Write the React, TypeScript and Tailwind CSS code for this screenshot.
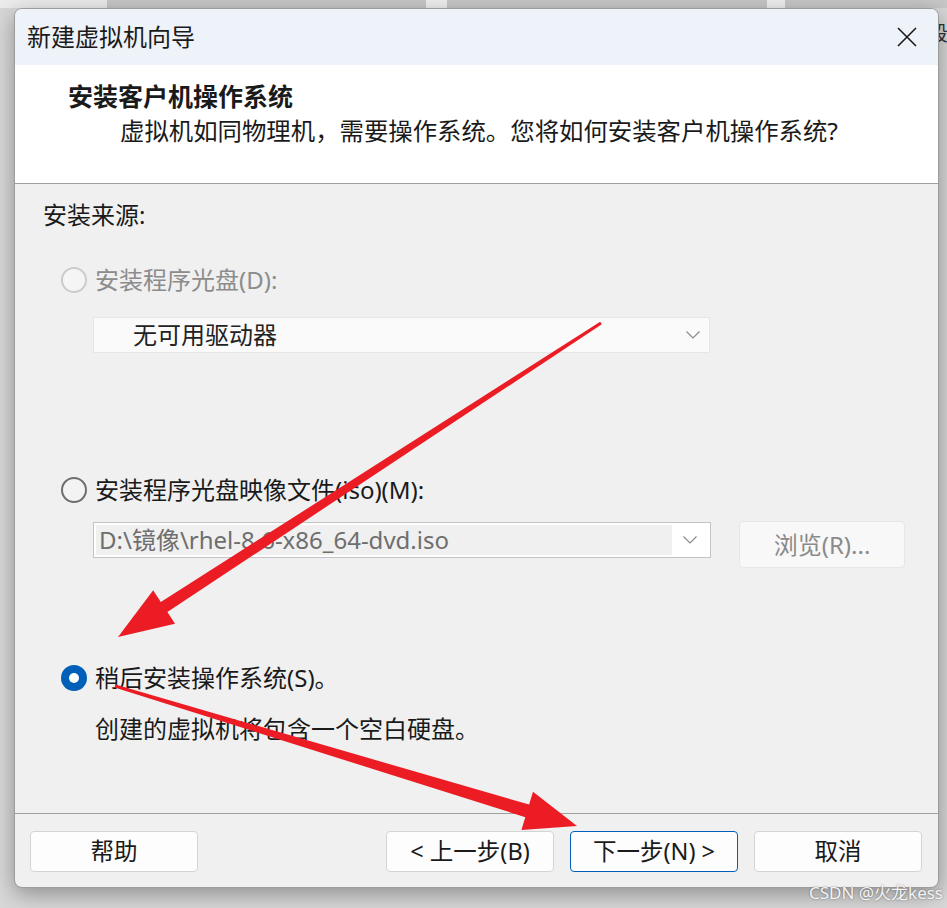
import React from "react";

const Chevron: React.FC = () => (
  <svg width="14" height="8" viewBox="0 0 14 8" className="flex-shrink-0">
    <polyline points="0.5,0.5 7,7 13.5,0.5" fill="none" stroke="#8a8a8a" strokeWidth="1.2" />
  </svg>
);

interface RadioProps {
  state: "disabled" | "off" | "on";
}

const Radio: React.FC<RadioProps> = ({ state }) => {
  if (state === "on") {
    return (
      <div className="w-[26px] h-[26px] rounded-full bg-[#005fb8] flex items-center justify-center flex-shrink-0">
        <div className="w-[10px] h-[10px] rounded-full bg-white" />
      </div>
    );
  }
  return (
    <div
      className={
        state === "disabled"
          ? "w-[26px] h-[26px] rounded-full border-2 border-[#cccccc] bg-[#f5f5f5] flex-shrink-0"
          : "w-[26px] h-[26px] rounded-full border-2 border-[#6e6e6e] bg-[#f3f3f3] flex-shrink-0"
      }
    />
  );
};

const buttons = [
  { label: "< 上一步(B)", primary: false },
  { label: "下一步(N) >", primary: true },
  { label: "取消", primary: false },
];

const Arrows: React.FC = () => (
  <svg
    width="947"
    height="908"
    viewBox="0 0 947 908"
    className="absolute inset-0 z-20 pointer-events-none"
  >
    <polygon
      fill="#ec1c24"
      points="601.8,324.3 167.4,612 175,623.8 118,637 153.2,590.2 160.8,602 600.2,321.7"
    />
    <polygon
      fill="#ec1c24"
      points="115.4,684.6 529.1,804.6 533,791.8 577,826 521.4,830 525.3,817.2 114.6,687.4"
    />
  </svg>
);

const App: React.FC = () => {
  return (
    <div className="relative w-[947px] h-[908px] overflow-hidden bg-[#d8d8d8] font-['Noto_Sans','Noto_Sans_CJK_SC',sans-serif] text-[#1a1a1a]">
      {/* desktop strip behind the dialog */}
      <div className="flex h-[8px]">
        <div className="w-[107px] bg-[#ececec]" />
        <div className="w-[319px] bg-[#c8c8c8]" />
        <div className="w-[21px] bg-[#f0f0f0]" />
        <div className="w-[320px] bg-[#c8c8c8]" />
        <div className="w-[18px] bg-[#f0f0f0]" />
        <div className="flex-1 bg-[#c8c8c8]" />
      </div>
      <span className="absolute left-[928px] top-[24px] text-[20px] leading-none text-[#333]">段</span>

      {/* dialog window */}
      <div className="relative z-10 ml-[14px] w-[925px] h-[880px] rounded-[8px] border border-[#9c9c9c] bg-[#f0f0f0] overflow-hidden flex flex-col shadow-[0_6px_22px_rgba(0,0,0,0.35)]">
        {/* title bar */}
        <div className="h-[56px] bg-[#eef2f9] flex items-center justify-between pl-[12px] pr-[21px] flex-shrink-0">
          <span className="text-[24px] leading-[30px]">新建虚拟机向导</span>
          <svg width="20" height="20" viewBox="0 0 20 20">
            <path d="M1 1 L19 19 M19 1 L1 19" stroke="#1a1a1a" strokeWidth="1.6" fill="none" />
          </svg>
        </div>

        {/* header */}
        <div className="h-[119px] bg-white border-b border-[#a0a0a0] flex flex-col flex-shrink-0">
          <div className="mt-[16px] ml-[53px] text-[25px] leading-[30px] font-bold">安装客户机操作系统</div>
          <div className="mt-[5px] ml-[105px] text-[24.4px] leading-[30px] whitespace-nowrap">
            虚拟机如同物理机，需要操作系统。您将如何安装客户机操作系统?
          </div>
        </div>

        {/* body */}
        <div className="h-[629px] flex flex-col flex-shrink-0 text-[24px]">
          <div className="mt-[16px] ml-[28px] h-[30px] flex items-center">安装来源:</div>

          <div className="mt-[35px] ml-[46px] h-[30px] flex items-center gap-[8px] text-[#8c8c8c]">
            <Radio state="disabled" />
            <span>安装程序光盘(D):</span>
          </div>

          <div className="mt-[22px] ml-[78px] w-[617px] h-[36px] bg-[#fafafa] border border-[#e6e6e6] flex items-center justify-between pl-[39px] pr-[9px]">
            <span className="text-[#222]">无可用驱动器</span>
            <Chevron />
          </div>

          <div className="mt-[122px] ml-[46px] h-[30px] flex items-center gap-[8px]">
            <Radio state="off" />
            <span>安装程序光盘映像文件(iso)(M):</span>
          </div>

          <div className="mt-[16px] ml-[78px] flex items-start">
            <div className="mt-[1px] w-[618px] h-[36px] bg-white border border-[#c4c4c4] flex items-center p-[2px]">
              <div className="flex-1 h-full bg-[#f0f0f0] flex items-center pl-[3px] text-[#6e6e6e] overflow-hidden whitespace-nowrap">
                D:\镜像\rhel-8.6-x86_64-dvd.iso
              </div>
              <div className="w-[36px] flex items-center justify-center">
                <Chevron />
              </div>
            </div>
            <div className="ml-[28px] w-[166px] h-[47px] rounded-[4px] bg-[#f8f8f8] border border-[#e6e6e6] flex items-center justify-center text-[#8a8a8a]">
              浏览(R)...
            </div>
          </div>

          <div className="mt-[95px] ml-[46px] h-[30px] flex items-center gap-[8px]">
            <Radio state="on" />
            <span>稍后安装操作系统(S)。</span>
          </div>

          <div className="mt-[21px] ml-[80px] h-[30px] flex items-center">创建的虚拟机将包含一个空白硬盘。</div>
        </div>

        {/* footer */}
        <div className="flex-1 border-t border-[#a0a0a0] flex items-start pt-[17px] pl-[15px] pr-[16px] text-[23.5px]">
          <div className="w-[168px] h-[41px] rounded-[4px] bg-[#fdfdfd] border border-[#d4d4d4] flex items-center justify-center">
            帮助
          </div>
          <div className="flex-1" />
          <div className="flex gap-[16px]">
            {buttons.map(({ label, primary }) => (
              <div
                key={label}
                className={
                  primary
                    ? "w-[168px] h-[41px] rounded-[4px] bg-[#fdfdfd] border border-[#005fb8] flex items-center justify-center"
                    : "w-[168px] h-[41px] rounded-[4px] bg-[#fdfdfd] border border-[#d4d4d4] flex items-center justify-center"
                }
              >
                {label}
              </div>
            ))}
          </div>
        </div>
      </div>

      <Arrows />

      <span className="absolute right-[4px] top-[882px] z-30 text-[17px] leading-[22px] text-[#f4f4f4] [text-shadow:0_0_2px_rgba(0,0,0,0.45)]">
        CSDN @火龙kess
      </span>
    </div>
  );
};

export default App;
